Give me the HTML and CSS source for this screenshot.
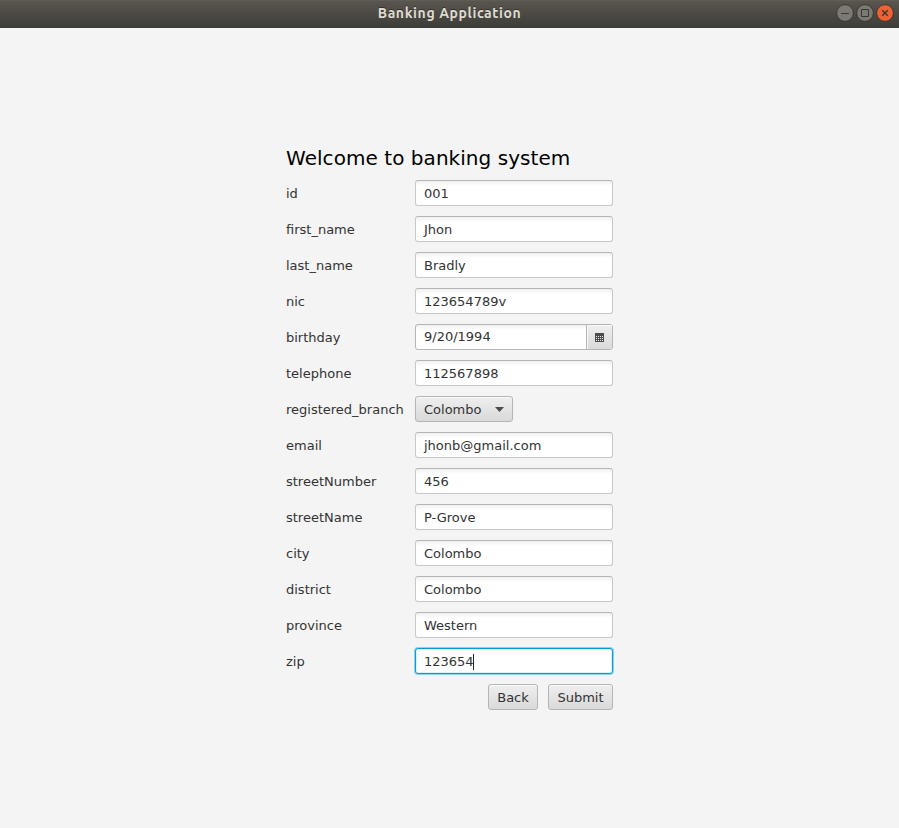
FILE: index.html
```html
<!DOCTYPE html>
<html lang="en">
<head>
<meta charset="utf-8">
<title>Banking Application</title>
<link rel="stylesheet" href="styles.css">
</head>
<body>
<header class="titlebar">
  <div class="title">Banking Application</div>
  <div class="controls">
    <svg class="control" viewBox="0 0 18 18"><circle class="disc" cx="9" cy="9" r="8.4"/><path class="glyph" d="M5 9.5h8"/></svg>
    <svg class="control" viewBox="0 0 18 18"><circle class="disc" cx="9" cy="9" r="8.4"/><path class="glyph" d="M5.5 5.5h7v7h-7z"/></svg>
    <svg class="control" viewBox="0 0 18 18"><circle class="disc close" cx="9" cy="9" r="8.4"/><path class="glyph cross" d="M6.2 6.2l5.6 5.6M11.8 6.2l-5.6 5.6"/></svg>
  </div>
</header>
<main class="form">
  <h1>Welcome to banking system</h1>
  <div class="grid">
    <label>id</label><div class="field">001</div>
    <label>first_name</label><div class="field">Jhon</div>
    <label>last_name</label><div class="field">Bradly</div>
    <label>nic</label><div class="field">123654789v</div>
    <label>birthday</label>
    <div class="datepicker">
      <div class="date">9/20/1994</div>
      <div class="calendar"><svg width="9" height="9" viewBox="0 0 9 9" shape-rendering="crispEdges"><path fill="#4c4c4c" d="M0 0h9v9H0z"/><path fill="#eee" d="M1 3h1v1H1zM3 3h1v1H3zM5 3h1v1H5zM7 3h1v1H7zM1 5h1v1H1zM3 5h1v1H3zM5 5h1v1H5zM7 5h1v1H7zM1 7h1v1H1zM3 7h1v1H3zM5 7h1v1H5zM7 7h1v1H7z"/></svg></div>
    </div>
    <label>telephone</label><div class="field">112567898</div>
    <label>registered_branch</label>
    <div class="button choice">Colombo<svg width="9" height="5" viewBox="0 0 9 5"><path fill="#4c4c4c" d="M0 0h9L4.5 5z"/></svg></div>
    <label>email</label><div class="field">jhonb@gmail.com</div>
    <label>streetNumber</label><div class="field">456</div>
    <label>streetName</label><div class="field">P-Grove</div>
    <label>city</label><div class="field">Colombo</div>
    <label>district</label><div class="field">Colombo</div>
    <label>province</label><div class="field">Western</div>
    <label>zip</label><div class="field focused">123654<span class="caret"></span></div>
  </div>
  <div class="actions">
    <div class="button back">Back</div>
    <div class="button submit">Submit</div>
  </div>
</main>
</body>
</html>
```
FILE: styles.css
```css
* { box-sizing: border-box; }
body {
  margin: 0;
  height: 828px;
  overflow: hidden;
  background: #f4f4f4;
  color: #333;
  font: 13px/26px "DejaVu Sans", sans-serif;
}
.titlebar {
  display: grid;
  grid-template-columns: 1fr auto 1fr;
  align-items: center;
  height: 28px;
  padding: 0 5px 3px;
  background: linear-gradient(#5a564e, #3d3c37);
  border-top: 1px solid #605c54;
}
.title {
  grid-column: 2;
  color: #dfdbd2;
  font: bold 14px/22px Ubuntu, "Noto Sans", sans-serif;
  letter-spacing: 0.6px;
  text-shadow: 0 -1px #33312d;
}
.controls { display: flex; gap: 2px; justify-content: flex-end; }
.control { width: 18px; height: 18px; }
.disc { fill: #7b7972; stroke: #393731; }
.close { fill: #ed6134; }
.glyph { fill: none; stroke: #393731; }
.cross { stroke-width: 1.4; }
.form { width: 327px; margin: 116px 0 0 286px; }
h1 {
  margin: 0;
  color: #000;
  font-size: 20px;
  font-weight: 400;
  line-height: 28px;
  letter-spacing: 0.05px;
  white-space: nowrap;
}
.grid {
  display: grid;
  grid-template-columns: 119px 198px;
  grid-auto-rows: 26px;
  gap: 10px;
  margin-top: 8px;
}
label { line-height: 28px; white-space: nowrap; }
.field, .datepicker {
  height: 26px;
  border: 1px solid #c8c8c8;
  border-top-color: #b5b5b5;
  border-radius: 3px;
  background: linear-gradient(#f0f0f0, #fff 5px);
}
.field { display: flex; align-items: center; padding: 2px 0 0 8px; }
.focused {
  border-color: #039ed3;
  background: #fff;
  box-shadow: 0 0 0 1px #039ed366, inset 0 0 0 1px #d8f0f8;
}
.caret { width: 1px; height: 16px; margin: -1px 0 0 -1px; background: #222; }
.datepicker { display: flex; border-color: #b5b5b5; }
.date { flex: 1; padding-left: 8px; line-height: 23px; }
.calendar {
  display: flex;
  align-items: center;
  justify-content: center;
  width: 26px;
  padding-top: 1px;
  border-left: 1px solid #b5b5b5;
  border-radius: 0 2px 2px 0;
  background: linear-gradient(#efefef, #dadada);
  box-shadow: inset 1px 1px #f8f8f8;
}
.calendar svg { flex: none; }
.button {
  height: 26px;
  border: 1px solid #b5b5b5;
  border-radius: 3px;
  background: linear-gradient(#efefef, #d9d9d9);
  box-shadow: inset 0 1px #fafafa;
  text-align: center;
}
.choice {
  display: flex;
  align-items: center;
  justify-content: space-between;
  width: 98px;
  padding: 1px 8px 0;
}
.actions { display: flex; justify-content: flex-end; gap: 10px; margin-top: 10px; }
.back { width: 50px; }
.submit { width: 65px; }
```
